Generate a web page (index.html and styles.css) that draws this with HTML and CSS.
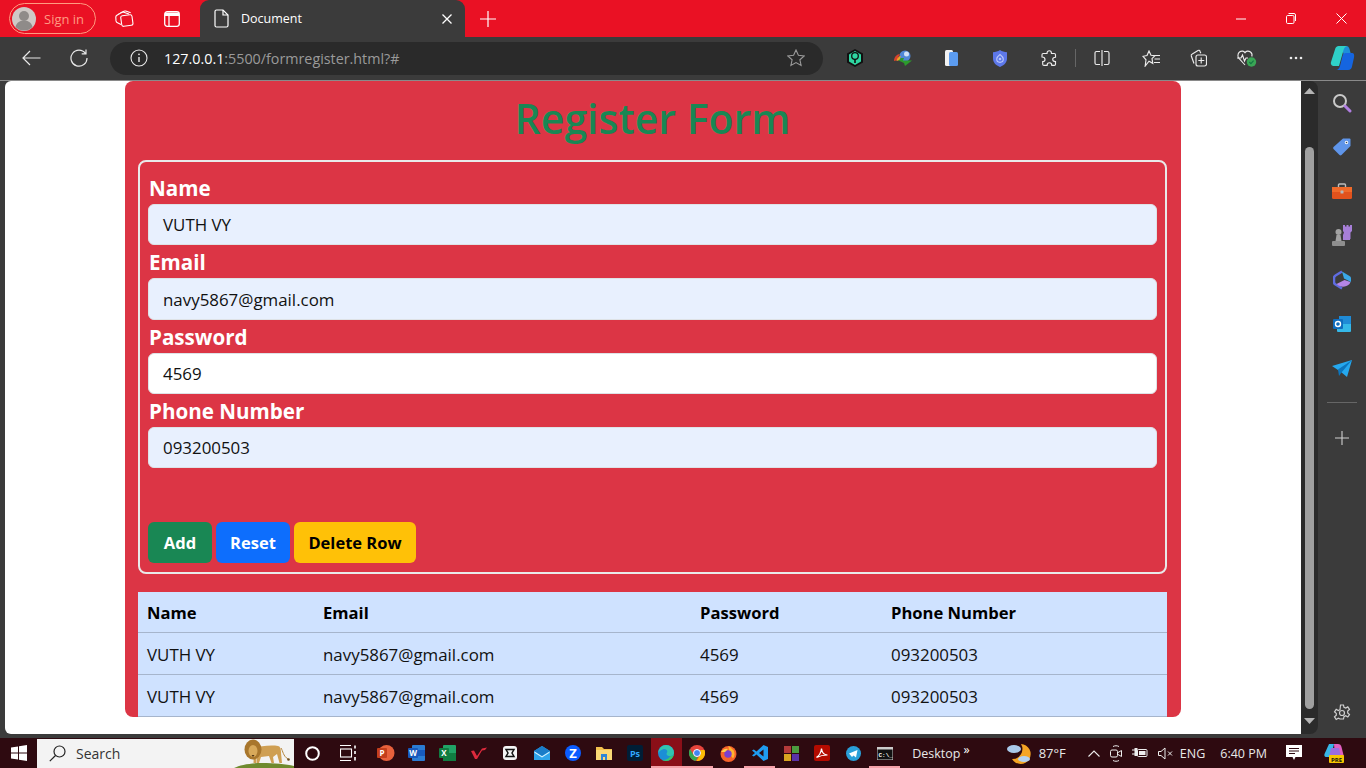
FILE: index.html
```html
<!DOCTYPE html>
<html lang="en">
<head>
<meta charset="utf-8">
<title>Document</title>
<link rel="stylesheet" href="styles.css">
</head>
<body>
<div class="screen">
  <header class="titlebar">
    <div class="signin">
      <svg width="24" height="24" viewBox="0 0 24 24"><circle cx="12" cy="12" r="12" fill="#cfc9c6"/><circle cx="12" cy="9" r="5" fill="#8f8b89"/><path d="M3.500 20c1-5 5-6.500 8.500-6.500s7.500 1.500 8.500 6.500a12 12 0 0 1-17 0z" fill="#8f8b89"/></svg>
      <span>Sign in</span>
    </div>
    <div class="tb-btn"><svg width="19" height="17" viewBox="0 0 19 17" fill="none" stroke="#fff" stroke-width="1.100"><path d="M5.500 3 9 1.200c.6-.3 1.100-.3 1.700-.1l5 1.700"/><path d="M3.500 4.200 7 2.300c.6-.3 1.100-.3 1.700-.1L14 4"/><path d="M6 14.500 2.500 12.800c-.9-.4-1.300-1-1.500-1.900L.8 7.300C.7 6.300 1 5.700 1.900 5.200L4 4"/><rect x="6.200" y="5.200" width="11.300" height="10.600" rx="1.800" transform="rotate(-8 12 10.500)"/></svg></div>
    <div class="tb-btn"><svg width="16" height="16" viewBox="0 0 16 16" fill="none" stroke="#fff" stroke-width="1.300"><rect x=".7" y=".7" width="14.600" height="14.600" rx="2.500"/><path d="M5 5v10.300"/><path d="M1 1.500h14V5H1z" fill="#fff" stroke="none"/></svg></div>
    <div class="tab">
      <svg width="15" height="19" viewBox="0 0 15 19" fill="none" stroke="#fff" stroke-width="1.200"><path d="M1 2.500C1 1.500 1.700 1 2.500 1H9l5 5v10.500c0 1-.7 1.500-1.500 1.500h-10C1.700 18 1 17.500 1 16.500z"/><path d="M9 1v5h5"/></svg>
      <span class="tab-title">Document</span>
      <svg class="tab-close" width="10" height="10" viewBox="0 0 10 10" stroke="#fff" stroke-width="1.300"><path d="M.5.500l9 9M9.500.500l-9 9"/></svg>
    </div>
    <div class="newtab"><svg width="16" height="16" viewBox="0 0 16 16" stroke="#fff" stroke-width="1.200"><path d="M8 0v16M0 8h16"/></svg></div>
    <div class="win-controls">
      <div class="win-btn"><svg width="10" height="2" viewBox="0 0 10 2" stroke="#fff"><path d="M0 1h10"/></svg></div>
      <div class="win-btn"><svg width="10" height="11" viewBox="0 0 10 11" fill="none" stroke="#fff"><rect x=".5" y="2.500" width="7.500" height="8" rx="1.200"/><path d="M2.500.500h5.500a1.500 1.500 0 0 1 1.500 1.500v6"/></svg></div>
      <div class="win-btn"><svg width="11" height="11" viewBox="0 0 11 11" stroke="#fff"><path d="M.5.500l10 10M10.500.500l-10 10"/></svg></div>
    </div>
  </header>

  <nav class="toolbar">
    <div class="nav-btn"><svg width="19" height="16" viewBox="0 0 19 16" fill="none" stroke="#e8e8e8" stroke-width="1.200"><path d="M18.500 8H1M8 1 1 8l7 7"/></svg></div>
    <div class="nav-btn"><svg width="18" height="18" viewBox="0 0 18 18" fill="none" stroke="#e8e8e8" stroke-width="1.200"><path d="M15.500 4.500A8 8 0 1 0 17 9M16 .5v4.300h-4.300"/></svg></div>
    <div class="address">
      <svg width="18" height="18" viewBox="0 0 18 18" fill="none" stroke="#e8e8e8" stroke-width="1.100"><circle cx="9" cy="9" r="8"/><path d="M9 8v5" stroke-width="1.400"/><circle cx="9" cy="5.300" r=".9" fill="#e8e8e8" stroke="none"/></svg>
      <span class="url"><span class="url-host">127.0.0.1</span>:5500/formregister.html?#</span>
      <svg class="star" width="18" height="18" viewBox="0 0 18 18" fill="none" stroke="#9a9a9a" stroke-width="1.100"><path d="M9 1l2.400 5.300 5.800.6-4.300 3.900 1.200 5.700L9 13.600l-5.100 2.900 1.200-5.700L.8 6.900l5.800-.6z"/></svg>
    </div>
    <div class="ext-group">
      <div class="ext"><svg width="16" height="18" viewBox="0 0 16 18"><path d="M8 0l8 4.500v9L8 18l-8-4.500v-9z" fill="#111"/><path d="M8 2l6 3.400v7.200L8 16l-6-3.400V5.400z" fill="#2ed6a1"/><circle cx="8" cy="7" r="3.300" fill="none" stroke="#111" stroke-width="1.300"/><path d="M8 10v4" stroke="#111" stroke-width="1.600"/></svg></div>
      <div class="ext"><svg width="19" height="16" viewBox="0 0 19 16"><circle cx="11" cy="6" r="5.500" fill="#4f87d6"/><circle cx="12.500" cy="4" r="2.500" fill="#cfe0f5"/><path d="M0 11c0-4 3-7 6-7-1.500 2-2 4-2 6z" fill="#d8432c"/><path d="M2.500 11C3 8 5 6 7 6 6 7.500 6 9 6 10z" fill="#eaa52a"/><path d="M4.500 10.500 7 8h3l-1 2.500h9L11 16l-1-3z" fill="#2c9b2c"/></svg></div>
      <div class="ext"><svg width="13" height="16" viewBox="0 0 13 16"><rect width="8" height="16" rx="1.500" fill="#f2f2f2"/><rect x="4" y="2" width="9" height="14" rx="1.500" fill="#5c9cf0"/></svg></div>
      <div class="ext"><svg width="14" height="17" viewBox="0 0 14 17"><path d="M7 0c2 1.500 4.500 2 7 2.200v6.300C14 12.500 11 15.500 7 17 3 15.500 0 12.500 0 8.500V2.200C2.500 2 5 1.500 7 0z" fill="#5d78ea"/><path d="M7 4.500c2 1.500 3.300 3 3.300 4.600a3.300 3.300 0 0 1-6.600 0C3.700 7.500 5 6 7 4.500z" fill="none" stroke="#b9c6fa" stroke-width="1.100"/><circle cx="7" cy="9" r="1.300" fill="#b9c6fa"/></svg></div>
      <div class="ext"><svg width="16" height="17" viewBox="0 0 16 17" fill="none" stroke="#ececec" stroke-width="1.150"><path d="M6 3.500C6 1.500 7 .7 8.300.7c1.400 0 2.200 1 2.200 2.800h2.800c.7 0 1.200.5 1.200 1.200v2.500c-1.700 0-2.800.8-2.800 2.100s1 2.300 2.800 2.300v2.600c0 .7-.5 1.200-1.200 1.200h-2.500c0-1.700-1-2.700-2.400-2.700-1.300 0-2.300 1-2.300 2.700H3c-.8 0-1.300-.5-1.300-1.200v-2.700c1.700 0 2.300-.9 2.300-2.100S3 7 1 7V4.700c0-.7.500-1.200 1.200-1.200z"/></svg></div>
      <div class="ext-sep"></div>
      <div class="ext"><svg width="16" height="16" viewBox="0 0 16 16" fill="none" stroke="#ececec" stroke-width="1.150"><path d="M6 1.500H2.500A1.500 1.500 0 0 0 1 3v10a1.500 1.500 0 0 0 1.500 1.500H6M10 1.500h3.500A1.500 1.500 0 0 1 15 3v10a1.500 1.500 0 0 1-1.500 1.500H10M8 0v16"/></svg></div>
      <div class="ext"><svg width="18" height="17" viewBox="0 0 18 17" fill="none" stroke="#ececec" stroke-width="1.150"><path d="M7 1l2 4.300 4 .4-3 3 .8 4.600L7 11.200 3.200 16l.8-6.200L1 6.300l4-.8z"/><path d="M12.500 5.500H18M12.500 9H18M12 12.500h6"/></svg></div>
      <div class="ext"><svg width="17" height="18" viewBox="0 0 17 18" fill="none" stroke="#ececec" stroke-width="1.150"><path d="M4 14.500 1.300 7C1 6 1.500 5.300 2.300 5L8 1.500c.8-.5 1.800 0 2 .7l.8 2"/><rect x="6" y="6" width="10.500" height="11" rx="2"/><path d="M11.200 8.500v6M8.300 11.500h6"/></svg></div>
      <div class="ext"><svg width="20" height="18" viewBox="0 0 20 18"><path d="M8 16 2 9.500C.5 8 .5 4.500 2.500 3c2-1.500 4.500-1 5.500.7C9 2 11.500 1.500 13.500 3c1.500 1.200 1.800 3 1.300 4.500" fill="none" stroke="#ececec" stroke-width="1.100"/><path d="M0 9h4l1.500-3 2 6 1.500-3h2" fill="none" stroke="#ececec" stroke-width="1.100"/><circle cx="14.500" cy="13" r="4.700" fill="#3aa655"/><path d="M12.300 13l1.600 1.600 2.700-3" fill="none" stroke="#174" stroke-width="1.100"/></svg></div>
      <div class="ext"><svg width="14" height="4" viewBox="0 0 14 4" fill="#ececec"><circle cx="2" cy="2" r="1.300"/><circle cx="7" cy="2" r="1.300"/><circle cx="12" cy="2" r="1.300"/></svg></div>
    </div>
    <div class="copilot"><svg width="26" height="26" viewBox="0 0 26 26"><path d="M9 1h8c2 0 3 1 3.500 3L23 13l-6 5-3-11c-.5-1.500-1.500-2-3-2z" fill="#1d8fd8"/><path d="M10 1C7.500 1 6.500 2.500 6 4.500L2 17c-.7 2.500 1 4 3 4h5l4-14c.7-2.500 1.500-6 5-6z" fill="#2fd0c8"/><path d="M23 8h-6c-2 0-3 1-3.500 3L11 21c-.5 2-2 4-4 4h12c2.500 0 3.500-1.500 4-3.500l2-9C25.500 10 25 8 23 8z" fill="#1565e0"/></svg></div>
  </nav>

  <div class="middle">
    <main class="page">
      <section class="card">
        <h1 class="title">Register Form</h1>
        <form class="form-box">
          <label class="field-label">Name</label>
          <div class="input autofill">VUTH VY</div>
          <label class="field-label">Email</label>
          <div class="input autofill">navy5867@gmail.com</div>
          <label class="field-label">Password</label>
          <div class="input">4569</div>
          <label class="field-label">Phone Number</label>
          <div class="input autofill">093200503</div>
          <div class="actions">
            <button type="button" class="btn btn-add">Add</button>
            <button type="button" class="btn btn-reset">Reset</button>
            <button type="button" class="btn btn-delete">Delete Row</button>
          </div>
        </form>
        <table class="data">
          <thead>
            <tr><th class="c-name">Name</th><th class="c-email">Email</th><th class="c-pass">Password</th><th>Phone Number</th></tr>
          </thead>
          <tbody>
            <tr><td>VUTH VY</td><td>navy5867@gmail.com</td><td>4569</td><td>093200503</td></tr>
            <tr><td>VUTH VY</td><td>navy5867@gmail.com</td><td>4569</td><td>093200503</td></tr>
          </tbody>
        </table>
      </section>
    </main>
    <div class="scrollbar">
      <svg width="11" height="6" viewBox="0 0 11 6" fill="#b5b5b5"><path d="M5.500 0 11 6H0z"/></svg>
      <div class="thumb"></div>
      <svg width="11" height="6" viewBox="0 0 11 6" fill="#b5b5b5"><path d="M0 0h11L5.500 6z"/></svg>
    </div>
    <aside class="sidebar">
      <div class="side-btn"><svg width="20" height="20" viewBox="0 0 20 20" fill="none"><circle cx="8" cy="8" r="6" stroke="#c9c9c9" stroke-width="2"/><path d="M13 13l5 5" stroke="#b07ee0" stroke-width="3" stroke-linecap="round"/></svg></div>
      <div class="side-btn"><svg width="20" height="20" viewBox="0 0 20 20"><path d="M11 1.500h6.500a1 1 0 0 1 1 1V9L9.500 18a1.500 1.500 0 0 1-2 0L1.500 12a1.500 1.500 0 0 1 0-2z" fill="#5f95ea"/><circle cx="14.500" cy="5.500" r="1.700" fill="#fff"/><circle cx="14.500" cy="5.500" r=".8" fill="#345"/></svg></div>
      <div class="side-btn"><svg width="20" height="16" viewBox="0 0 20 16"><path d="M6.500 4V2a1 1 0 0 1 1-1h5a1 1 0 0 1 1 1v2" fill="none" stroke="#bdbdbd" stroke-width="1.400"/><rect y="4" width="20" height="12" rx="1.500" fill="#e2521c"/><rect y="4" width="20" height="5" fill="#f06a2a"/><rect x="8.500" y="7.500" width="3" height="3" rx=".5" fill="#b8b8b8"/></svg></div>
      <div class="side-btn"><svg width="20" height="21" viewBox="0 0 20 21"><path d="M11 0h2v1.500h1.500V0h2v1.500H18V0h2v6l-1.500 1.500V14H18v1h-7V10l1-2.500L11 6z" fill="#a77fd8"/><circle cx="6.500" cy="7" r="3" fill="#a2a2a2"/><path d="M4.500 10h4l1 6h-6z" fill="#a2a2a2"/><rect y="16" width="13" height="5" rx="1" fill="#8e8e8e"/></svg></div>
      <div class="side-btn"><svg width="19" height="20" viewBox="0 0 19 20" fill="none"><path d="M9 1.500 2.500 5.500c-1 .6-1.500 1.400-1.500 2.500v4c0 1.100.5 1.900 1.500 2.500L9 18.500" stroke="#5f6ce0" stroke-width="2.500"/><path d="M3.500 14c4 3.500 9 3.500 13 0l1-2-6-2z" fill="#b585e6"/><path d="M9 1.500l7.500 4.500c1 .6 1.500 1.400 1.500 2.500V12l-7-3.500z" fill="#3aa8e8"/></svg></div>
      <div class="side-btn"><svg width="18" height="18" viewBox="0 0 18 18"><rect x="6" y="1" width="12" height="12" fill="#1f8bd6"/><path d="M4 9h14v7a1 1 0 0 1-1 1H5a1 1 0 0 1-1-1z" fill="#35b8e8"/><rect y="4" width="10" height="10" rx="1" fill="#0f6cbd"/><circle cx="5" cy="9" r="2.500" fill="none" stroke="#fff" stroke-width="1.400"/></svg></div>
      <div class="side-btn"><svg width="20" height="17" viewBox="0 0 20 17"><path d="M0 6 20 0 15 17 9 12z" fill="#25a8ee"/><path d="M20 0 6 9.500 7 16 9.500 12.500z" fill="#0c75bd"/></svg></div>
      <div class="side-divider"></div>
      <div class="side-btn side-plus"><svg width="14" height="14" viewBox="0 0 14 14" stroke="#d0d0d0" stroke-width="1.100"><path d="M7 0v14M0 7h14"/></svg></div>
      <div class="side-spacer"></div>
      <div class="side-btn side-settings"><svg width="18" height="18" viewBox="0 0 18 18" fill="none" stroke="#d0d0d0" stroke-width="1.200"><path d="M7.500 1h3l.5 2.300 1.700.8 2.100-1.200 1.700 2.500-1.800 1.600v1.900l1.800 1.600-1.700 2.500-2.100-1.200-1.700.8-.5 2.400h-3L7 15l-1.700-.8-2.100 1.200-1.700-2.500 1.800-1.600V9.400L1.500 7.800l1.700-2.500 2.100 1.200L7 5.700z"/><circle cx="9" cy="9" r="2.500"/></svg></div>
    </aside>
  </div>

  <footer class="taskbar">
    <div class="start"><svg width="16" height="16" viewBox="0 0 16 16" fill="#fff"><path d="M0 2.500 7 1.500v6H0zM8 1.300 16 0v7.500H8zM0 8.500h7v6l-7-1zM8 8.500h8V16l-8-1.200z"/></svg></div>
    <div class="search">
      <svg width="17" height="17" viewBox="0 0 17 17" fill="none" stroke="#222" stroke-width="1.200"><circle cx="10.500" cy="6.500" r="5.500"/><path d="M6.500 10.500.8 16.200"/></svg>
      <span class="search-text">Search</span>
      <svg class="lion" width="60" height="29" viewBox="0 0 60 29"><path d="M0 29c6-3 16-5 28-5s24 1 32 3v2z" fill="#6f8a2e"/><path d="M20 9c6-2 17-3 24-2 2 0 3 3 3 7l1 10h-2.500l-2.500-9-4 3 1 6h-2.500l-2.500-7-8 1-2 6h-2.500l0-6H22v6h-2.500z" fill="#cf9f52"/><path d="M47 9c2 3 2 8 7 11" fill="none" stroke="#b5853c"/><circle cx="54.500" cy="20.500" r="1.300" fill="#6b4a1c"/><ellipse cx="19" cy="10.500" rx="8.500" ry="10" fill="#a8762c"/><ellipse cx="19" cy="12" rx="4.500" ry="6" fill="#d8a95a"/><path d="M17.500 16h3L19 18z" fill="#4c3215"/></svg>
    </div>
    <div class="task-cell cell-wide"><svg width="15" height="15" viewBox="0 0 15 15" fill="none" stroke="#fff" stroke-width="2"><circle cx="7.500" cy="7.500" r="6.300"/></svg></div>
    <div class="task-cell cell-wide"><svg width="16" height="16" viewBox="0 0 16 16" fill="none" stroke="#fff" stroke-width="1.100"><path d="M0 .5h11M0 15.500h11"/><rect x=".5" y="4" width="11" height="8"/><path d="M15 .5v3M15 6v3M15 12v3.500" stroke-width="1.600"/></svg></div>
    <div class="task-cell"><svg width="18" height="16" viewBox="0 0 18 16"><circle cx="9.500" cy="8" r="8" fill="#e8613c"/><rect y="3" width="10" height="10" rx="1" fill="#c43e1c"/><text x="5" y="11.300" class="ic-letter">P</text></svg></div>
    <div class="task-cell"><svg width="17" height="16" viewBox="0 0 17 16"><rect x="4" width="13" height="16" rx="1" fill="#2b7cd3"/><rect x="4" y="5" width="13" height="6" fill="#185abd"/><rect y="3" width="10" height="10" rx="1" fill="#185abd"/><text x="5" y="11.300" class="ic-letter">W</text></svg></div>
    <div class="task-cell"><svg width="17" height="16" viewBox="0 0 17 16"><rect x="4" width="13" height="16" rx="1" fill="#21a366"/><rect x="4" y="8" width="13" height="8" fill="#107c41"/><rect y="3" width="10" height="10" rx="1" fill="#107c41"/><text x="5" y="11.300" class="ic-letter">X</text></svg></div>
    <div class="task-cell"><svg width="16" height="12" viewBox="0 0 16 12"><path d="M0 4l3-.5L6 9 11 1.500l5-1-2 2.500-3 .5L6 12H4z" fill="#dd2a3c"/></svg></div>
    <div class="task-cell"><svg width="14" height="14" viewBox="0 0 14 14"><rect width="14" height="14" rx="3" fill="#f5f5f5"/><path d="M3 3.500h8l-2 3.500 2 3.500H3l2-3.500z" fill="none" stroke="#111" stroke-width="1.500"/></svg></div>
    <div class="task-cell"><svg width="16" height="14" viewBox="0 0 16 14"><path d="M0 5l8-5 8 5v9H0z" fill="#2fa4ea"/><path d="M0 5l8 5 8-5-8-5z" fill="#1a7cc8"/><path d="M.5 5.500 8 10.200l7.500-4.700v1.300L8 11.500.5 6.800z" fill="#d6f1fd"/></svg></div>
    <div class="task-cell"><svg width="16" height="16" viewBox="0 0 16 16"><circle cx="8" cy="8" r="8" fill="#0b5cff"/><text x="8" y="12.500" text-anchor="middle" class="ic-zoom">Z</text></svg></div>
    <div class="task-cell"><svg width="16" height="14" viewBox="0 0 16 14"><path d="M0 1h6l2 2h8v11H0z" fill="#f2c14e"/><rect y="4" width="16" height="10" fill="#f9d976"/><rect x="5" y="8" width="6" height="6" fill="#2b86d6"/><rect x="7" y="11" width="2" height="3" fill="#f9d976"/></svg></div>
    <div class="task-cell"><svg width="16" height="16" viewBox="0 0 16 16"><rect width="16" height="16" rx="2" fill="#001e36"/><text x="8" y="11.500" text-anchor="middle" class="ic-ps">Ps</text></svg></div>
    <div class="task-cell active"><svg width="16" height="16" viewBox="0 0 16 16"><circle cx="8" cy="8" r="8" fill="#1b8fd6"/><path d="M.2 8C.7 3.500 4 0 8 0a8 8 0 0 1 8 8c0 2-2 3-4 3-2 0-3.500-.8-3.500-2.300 0-.8.800-1.200.8-2.200C9.300 4.500 7 3.500 5 4.200 2.500 5 1 6.500.2 8z" fill="#32c4b0"/><path d="M16 9c-.7 4-4 7-8 7-1.500 0-3-.5-4-1.200 3 .5 6.500-.5 8-3.300 1.500 0 3-.8 4-2.500z" fill="#38c76a"/></svg></div>
    <div class="task-cell open"><svg width="16" height="16" viewBox="0 0 16 16"><circle cx="8" cy="8" r="8" fill="#e8453c"/><path d="M8 16a8 8 0 0 1-7-12l3.500 6a4 4 0 0 0 4.500 2L6.500 16z" fill="#34a853"/><path d="M15.500 5a8 8 0 0 1-8 11l3.500-6a4 4 0 0 0 0-5z" fill="#fbbc05"/><circle cx="8" cy="8" r="3.500" fill="#4285f4" stroke="#fff"/></svg></div>
    <div class="task-cell"><svg width="17" height="17" viewBox="0 0 17 17"><circle cx="8.500" cy="9" r="8" fill="#f7632a"/><path d="M8.500 1c3 1 2.500 3 5 4 1.500 3 1.500 6-.5 8.500L9 8z" fill="#ffb42e"/><circle cx="8" cy="9" r="3.700" fill="#7a3fd0"/><path d="M1 7c2-3 5-4 7-3L5 7z" fill="#ffcf4a"/></svg></div>
    <div class="task-cell open"><svg width="16" height="16" viewBox="0 0 16 16"><path d="M11.500 0 16 2v12l-4.500 2-7-6.500-2.700 2L0 10.500 3 8 0 5.500 1.800 4.500l2.700 2z" fill="#1f9cf0"/><path d="M11.500 4.500v7L7 8z" fill="#2e0a10"/></svg></div>
    <div class="task-cell"><svg width="15" height="15" viewBox="0 0 15 15"><rect width="7" height="7" fill="#b33a3a"/><rect x="8" width="7" height="7" fill="#4c9a3f"/><rect y="8" width="7" height="7" fill="#d9a520"/><rect x="8" y="8" width="7" height="7" fill="#5a32a8"/></svg></div>
    <div class="task-cell"><svg width="16" height="16" viewBox="0 0 16 16"><rect width="16" height="16" rx="2" fill="#b30b00"/><path d="M2.500 12.500c3-2 4.500-5 5-9 .5 4 3 6.500 6 6.500-3.500 0-7 .5-11 2.500z" fill="none" stroke="#fff" stroke-width="1.200"/></svg></div>
    <div class="task-cell"><svg width="15" height="15" viewBox="0 0 15 15"><circle cx="7.500" cy="7.500" r="7.500" fill="#2a9fd8"/><path d="M3 7.500 11.500 4 10 11.500 7.500 9.500 6 11z" fill="#fff"/></svg></div>
    <div class="task-cell open"><svg width="16" height="13" viewBox="0 0 16 13"><rect width="16" height="13" fill="#111" stroke="#ccc"/><rect width="16" height="2.500" fill="#ccc"/><text x="1.500" y="10" class="ic-cmd">C:\_</text></svg></div>
    <span class="desktop">Desktop</span>
    <span class="chev">»</span>
    <div class="weather"><svg width="25" height="21" viewBox="0 0 25 21"><path d="M15 1a10 10 0 1 1-9 15 10 10 0 0 0 9-15z" fill="#f5a524"/><ellipse cx="8" cy="6" rx="7" ry="4" fill="#a9c9ea"/><ellipse cx="18" cy="16" rx="6" ry="3" fill="#b6d2ee"/></svg></div>
    <span class="temp">87°F</span>
    <div class="tray">
      <svg width="12" height="7" viewBox="0 0 12 7" fill="none" stroke="#ededed" stroke-width="1.100"><path d="M.5 6.500 6 1l5.500 5.500"/></svg>
      <svg width="12" height="17" viewBox="0 0 12 17" fill="none" stroke="#ededed"><path d="M3 1.500c2-1 4-1 6 0M3 15.500c2 1 4 1 6 0"/><rect x=".5" y="5" width="7" height="7" rx="1.500"/><path d="M8 7.500l3.500-2v6l-3.500-2"/></svg>
      <svg width="16" height="10" viewBox="0 0 16 10" fill="none" stroke="#ededed"><path d="M0 2h3M0 6h3"/><rect x="3" y="0.500" width="2" height="7" fill="#ededed"/><rect x="5.500" y="1.500" width="9.500" height="7" rx="1"/><rect x="7" y="3" width="6.500" height="4" fill="#ededed" stroke="none"/></svg>
      <svg width="15" height="13" viewBox="0 0 15 13" fill="none" stroke="#ededed"><path d="M.5 4.500h2.500L7 1v11L3 8.500H.5z"/><path d="M10 4.500l4 4M14 4.500l-4 4"/></svg>
    </div>
    <span class="lang">ENG</span>
    <span class="clock">6:40 PM</span>
    <div class="notify"><svg width="16" height="16" viewBox="0 0 16 16"><path d="M0 0h16v12H9.500L8 15l-1.500-3H0z" fill="#fff"/><path d="M3 3.500h10M3 6h10M3 8.500h6" stroke="#2e0a10"/></svg></div>
    <div class="tray-copilot"><svg width="20" height="20" viewBox="0 0 20 20"><path d="M5 1h5L7 14H2C.5 14 0 12.500.5 11z" fill="#38b6e8"/><path d="M10 1h4c2 0 3 1 3.500 3L20 14H11z" fill="#e05fc0"/><path d="M7 5h8l2 9H5z" fill="#9a6de0"/><rect x="5" y="12" width="15" height="8" rx="1" fill="#f7c600"/><text x="12.500" y="18.500" text-anchor="middle" class="ic-pre">PRE</text></svg></div>
  </footer>
</div>
</body>
</html>
```
FILE: styles.css
```css
* { box-sizing: border-box; }
html, body { margin: 0; padding: 0; height: 100%; overflow: hidden; }
body { font-family: "Open Sans", "Noto Sans", sans-serif; background: #3b3b3b; }
svg { display: block; flex: none; }

.screen { width: 1366px; height: 768px; display: flex; flex-direction: column; overflow: hidden; }

/* title bar */
.titlebar { height: 37px; background: #ea1124; display: flex; align-items: center; flex: none; padding-left: 9px; }
.signin { width: 87px; height: 31px; border: 1px solid #ff9b80; border-radius: 16px; display: flex; align-items: center; gap: 8px; padding-left: 2px; color: #ff9a82; font-size: 13px; }
.tb-btn { width: 47px; height: 37px; display: flex; align-items: center; justify-content: center; margin-left: 5px; }
.tb-btn + .tb-btn { margin-left: 0; }
.tab { width: 265px; height: 37px; margin-left: 5px; background: #3b3b3b; border-radius: 9px 9px 0 0; display: flex; align-items: center; padding-left: 14px; color: #fff; font-size: 12.5px; }
.tab-title { margin-left: 12px; }
.tab-close { margin-left: auto; margin-right: 13px; }
.newtab { margin-left: 15px; }
.win-controls { margin-left: auto; display: flex; }
.win-btn { width: 50px; height: 37px; display: flex; align-items: center; justify-content: center; }

/* toolbar */
.toolbar { height: 44px; flex: none; background: #3b3b3b; border-bottom: 1px solid #8a8a8a; display: flex; align-items: center; padding: 0 0 1px 7px; }
.nav-btn { width: 48px; display: flex; justify-content: center; }
.address { width: 713px; height: 33px; margin-left: 7px; background: #2a2a2a; border-radius: 17px; display: flex; align-items: center; padding: 0 18px 0 20px; font-size: 14.3px; color: #9a9a9a; }
.url { margin-left: 16px; }
.url-host { color: #fff; }
.star { margin-left: auto; }
.ext-group { display: flex; align-items: center; margin-left: 8px; }
.ext { width: 48.400px; display: flex; justify-content: center; }
.ext-sep { width: 1px; height: 18px; background: #666; margin: 0 2px; }
.copilot { margin-left: 9px; }

/* middle */
.middle { flex: 1; display: flex; min-height: 0; }
.page { width: 1296px; height: 653px; margin-left: 5px; background: #fff; border-radius: 6px 0 0 6px; overflow: hidden; padding-left: 120px; flex: none; }
.scrollbar { width: 17px; height: 653px; background: #2b2b2b; border-radius: 0 8px 8px 0; display: flex; flex-direction: column; align-items: center; padding: 7px 0 10px; flex: none; }
.thumb { width: 9px; flex: 1; margin: 53px 0 9px; background: #a0a0a0; border-radius: 5px; }
.sidebar { flex: 1; display: flex; flex-direction: column; align-items: center; }
.side-btn { width: 48px; height: 44.200px; display: flex; align-items: center; justify-content: center; flex: none; }
.side-divider { width: 30px; height: 1px; background: #666; margin-top: 12px; }
.side-plus { margin-top: 13px; }
.side-spacer { flex: 1; }
.side-settings { height: 42px; }

/* page content */
.card { width: 1056px; height: 636px; background: #dc3545; border-radius: 8px; padding: 0 14px 0 13px; }
.title { margin: 0; height: 79px; display: flex; align-items: center; justify-content: center; color: #198754; font-size: 41px; font-weight: 600; padding-bottom: 5px; }
.form-box { border: 2px solid #e9e9e9; border-radius: 8px; padding: 9px 8px; height: 414px; display: flex; flex-direction: column; }
.field-label { display: block; height: 33px; line-height: 33px; padding-top: 1px; padding-left: 1px; color: #fff; font-size: 20.600px; font-weight: 700; flex: none; }
.input { height: 41.330px; flex: none; border: 1px solid #dee2e6; border-radius: 6px; background: #fff; padding: .5px 14px 0; display: flex; align-items: center; font-size: 16.900px; color: #111; }
.autofill { background: #e8f0fe; }
.actions { margin-top: auto; display: flex; gap: 4px; }
.btn { height: 41px; border: 0; border-radius: 6px; padding: 0 0 1px; font-family: inherit; font-size: 16.500px; font-weight: 700; color: #fff; }
.btn-add { width: 64px; background: #198754; }
.btn-reset { width: 74px; background: #0d6efd; }
.btn-delete { width: 122px; background: #ffc107; color: #000; }

.data { width: 1029px; margin-top: 18px; border-collapse: separate; border-spacing: 0; table-layout: fixed; background: #cfe2ff; color: #111; font-size: 16.900px; }
.data th, .data td { text-align: left; padding: 2px 9px 0; border-bottom: 1px solid #a6b5cc; font-weight: 400; }
.data th { height: 41px; padding-top: 1px; font-weight: 700; color: #000; font-size: 16.600px; }
.data td { height: 42px; }
.c-name { width: 176px; }
.c-email { width: 377px; }
.c-pass { width: 191px; }

/* task bar */
.taskbar { height: 30px; flex: none; background: #2e0a10; display: flex; align-items: center; margin-top: 4px; color: #e8e8e8; font-size: 12.500px; }
.start { width: 37px; display: flex; justify-content: center; }
.search { width: 257px; height: 29px; margin-top: 1px; background: #f3f3f3; display: flex; align-items: center; padding-left: 12px; color: #333; font-size: 14px; }
.search-text { margin-left: 10px; }
.lion { margin-left: auto; }
.task-cell { width: 31.200px; height: 30px; display: flex; align-items: center; justify-content: center; flex: none; }
.cell-wide { width: 36px; }
.cell-wide + .cell-wide { margin-right: 4px; }
.task-cell.active { background: #8a0f18; box-shadow: inset 0 -2px 0 #f4a0a8; }
.task-cell.open { box-shadow: inset 0 -2px 0 #f4a0a8; }
.ic-letter { fill: #fff; font: 700 8px "Open Sans", sans-serif; text-anchor: middle; }
.ic-zoom { fill: #fff; font: 700 13px "Open Sans", sans-serif; }
.ic-ps { fill: #31a8ff; font: 700 9px "Open Sans", sans-serif; }
.ic-cmd { fill: #fff; font: 700 6px "Liberation Mono", monospace; }
.ic-pre { fill: #111; font: 700 6px "Open Sans", sans-serif; }
.desktop { margin-left: 12px; }
.chev { margin-left: 3px; margin-top: -8px; color: #fff; }
.weather { margin-left: 36px; }
.temp { margin-left: 8px; font-size: 13px; }
.tray { margin-left: 22px; display: flex; align-items: center; gap: 10px; }
.lang { margin-left: 7px; }
.clock { margin-left: 15px; }
.notify { margin-left: 19px; }
.tray-copilot { margin-left: 22px; }
```
